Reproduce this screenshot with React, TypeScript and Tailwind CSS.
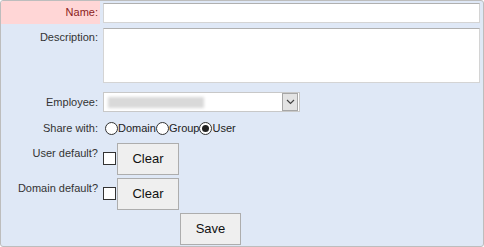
import React from "react";

function Radio({ checked, label }: { checked?: boolean; label: string }) {
  return (
    <div className="flex items-center">
      <div className="w-[13px] h-[13px] rounded-full border border-[#333] bg-white flex items-center justify-center">
        {checked && <div className="w-[7px] h-[7px] rounded-full bg-[#222]" />}
      </div>
      <span className="text-[11px] leading-[13px] text-[#222]">{label}</span>
    </div>
  );
}

export default function App() {
  return (
    <div
      className="w-[484px] h-[247px] border border-[#bdbdbd] rounded-[3px] bg-[#dfe8f6] flex flex-col overflow-hidden"
      style={{ fontFamily: '"Liberation Sans", Arial, sans-serif' }}
    >
      {/* Name */}
      <div className="flex h-[23px]">
        <div className="w-[99px] h-full bg-[#ffd6d6] flex items-center justify-end pr-[2px] text-[11px] text-[#8b1c1c]">
          Name:
        </div>
        <div className="ml-[3px] mt-[2px] w-[377px] h-[20px] bg-white border border-[#d4d4d4] border-t-[#b0b0b0]" />
      </div>
      {/* Description */}
      <div className="flex mt-[4px]">
        <div className="w-[99px] flex justify-end pr-[2px] pt-[3px] text-[11px] leading-[13px] text-[#333]">
          Description:
        </div>
        <div className="ml-[3px] w-[377px] h-[55px] bg-white border border-[#d4d4d4] border-t-[#b0b0b0]" />
      </div>
      {/* Employee */}
      <div className="flex mt-[9px] items-center">
        <div className="w-[99px] flex justify-end pr-[2px] text-[11px] leading-[13px] text-[#333]">
          Employee:
        </div>
        <div className="ml-[3px] w-[197px] h-[20px] bg-white border border-[#c8c8c8] flex items-center justify-between">
          <div className="ml-[4px] w-[96px] h-[11px] bg-[#d9d9d9] blur-[1.5px]" />
          <div className="w-[16px] h-[18px] bg-[#e3e3e3] border border-[#a6a6a6] flex items-center justify-center mr-[1px]">
            <svg width="9" height="6" viewBox="0 0 9 6">
              <path d="M1 1 L4.5 4.5 L8 1" fill="none" stroke="#444" strokeWidth="1.2" />
            </svg>
          </div>
        </div>
      </div>
      {/* Share with */}
      <div className="flex mt-[8px] items-center h-[17px]">
        <div className="w-[99px] flex justify-end pr-[2px] text-[11px] leading-[13px] text-[#333]">
          Share with:
        </div>
        <div className="ml-[5px] flex items-center">
          <Radio label="Domain" />
          <Radio label="Group" />
          <Radio label="User" checked />
        </div>
      </div>
      {/* User default */}
      <div className="flex mt-[6px]">
        <div className="w-[99px] flex justify-end pr-[2px] pt-[4px] text-[11px] leading-[13px] text-[#333]">
          User default?
        </div>
        <div className="ml-[3px] mt-[9px] w-[13px] h-[13px] bg-white border border-[#333]" />
        <button className="ml-[1px] w-[62px] h-[32px] bg-[#efefef] border border-[#adadad] text-[13px] text-[#111]">
          Clear
        </button>
      </div>
      {/* Domain default */}
      <div className="flex mt-[3px]">
        <div className="w-[99px] flex justify-end pr-[2px] pt-[4px] text-[11px] leading-[13px] text-[#333]">
          Domain default?
        </div>
        <div className="ml-[3px] mt-[9px] w-[13px] h-[13px] bg-white border border-[#333]" />
        <button className="ml-[1px] w-[62px] h-[32px] bg-[#efefef] border border-[#adadad] text-[13px] text-[#111]">
          Clear
        </button>
      </div>
      {/* Save */}
      <div className="flex mt-[3px]">
        <button className="ml-[179px] w-[61px] h-[32px] bg-[#efefef] border border-[#adadad] text-[13px] text-[#111]">
          Save
        </button>
      </div>
    </div>
  );
}
